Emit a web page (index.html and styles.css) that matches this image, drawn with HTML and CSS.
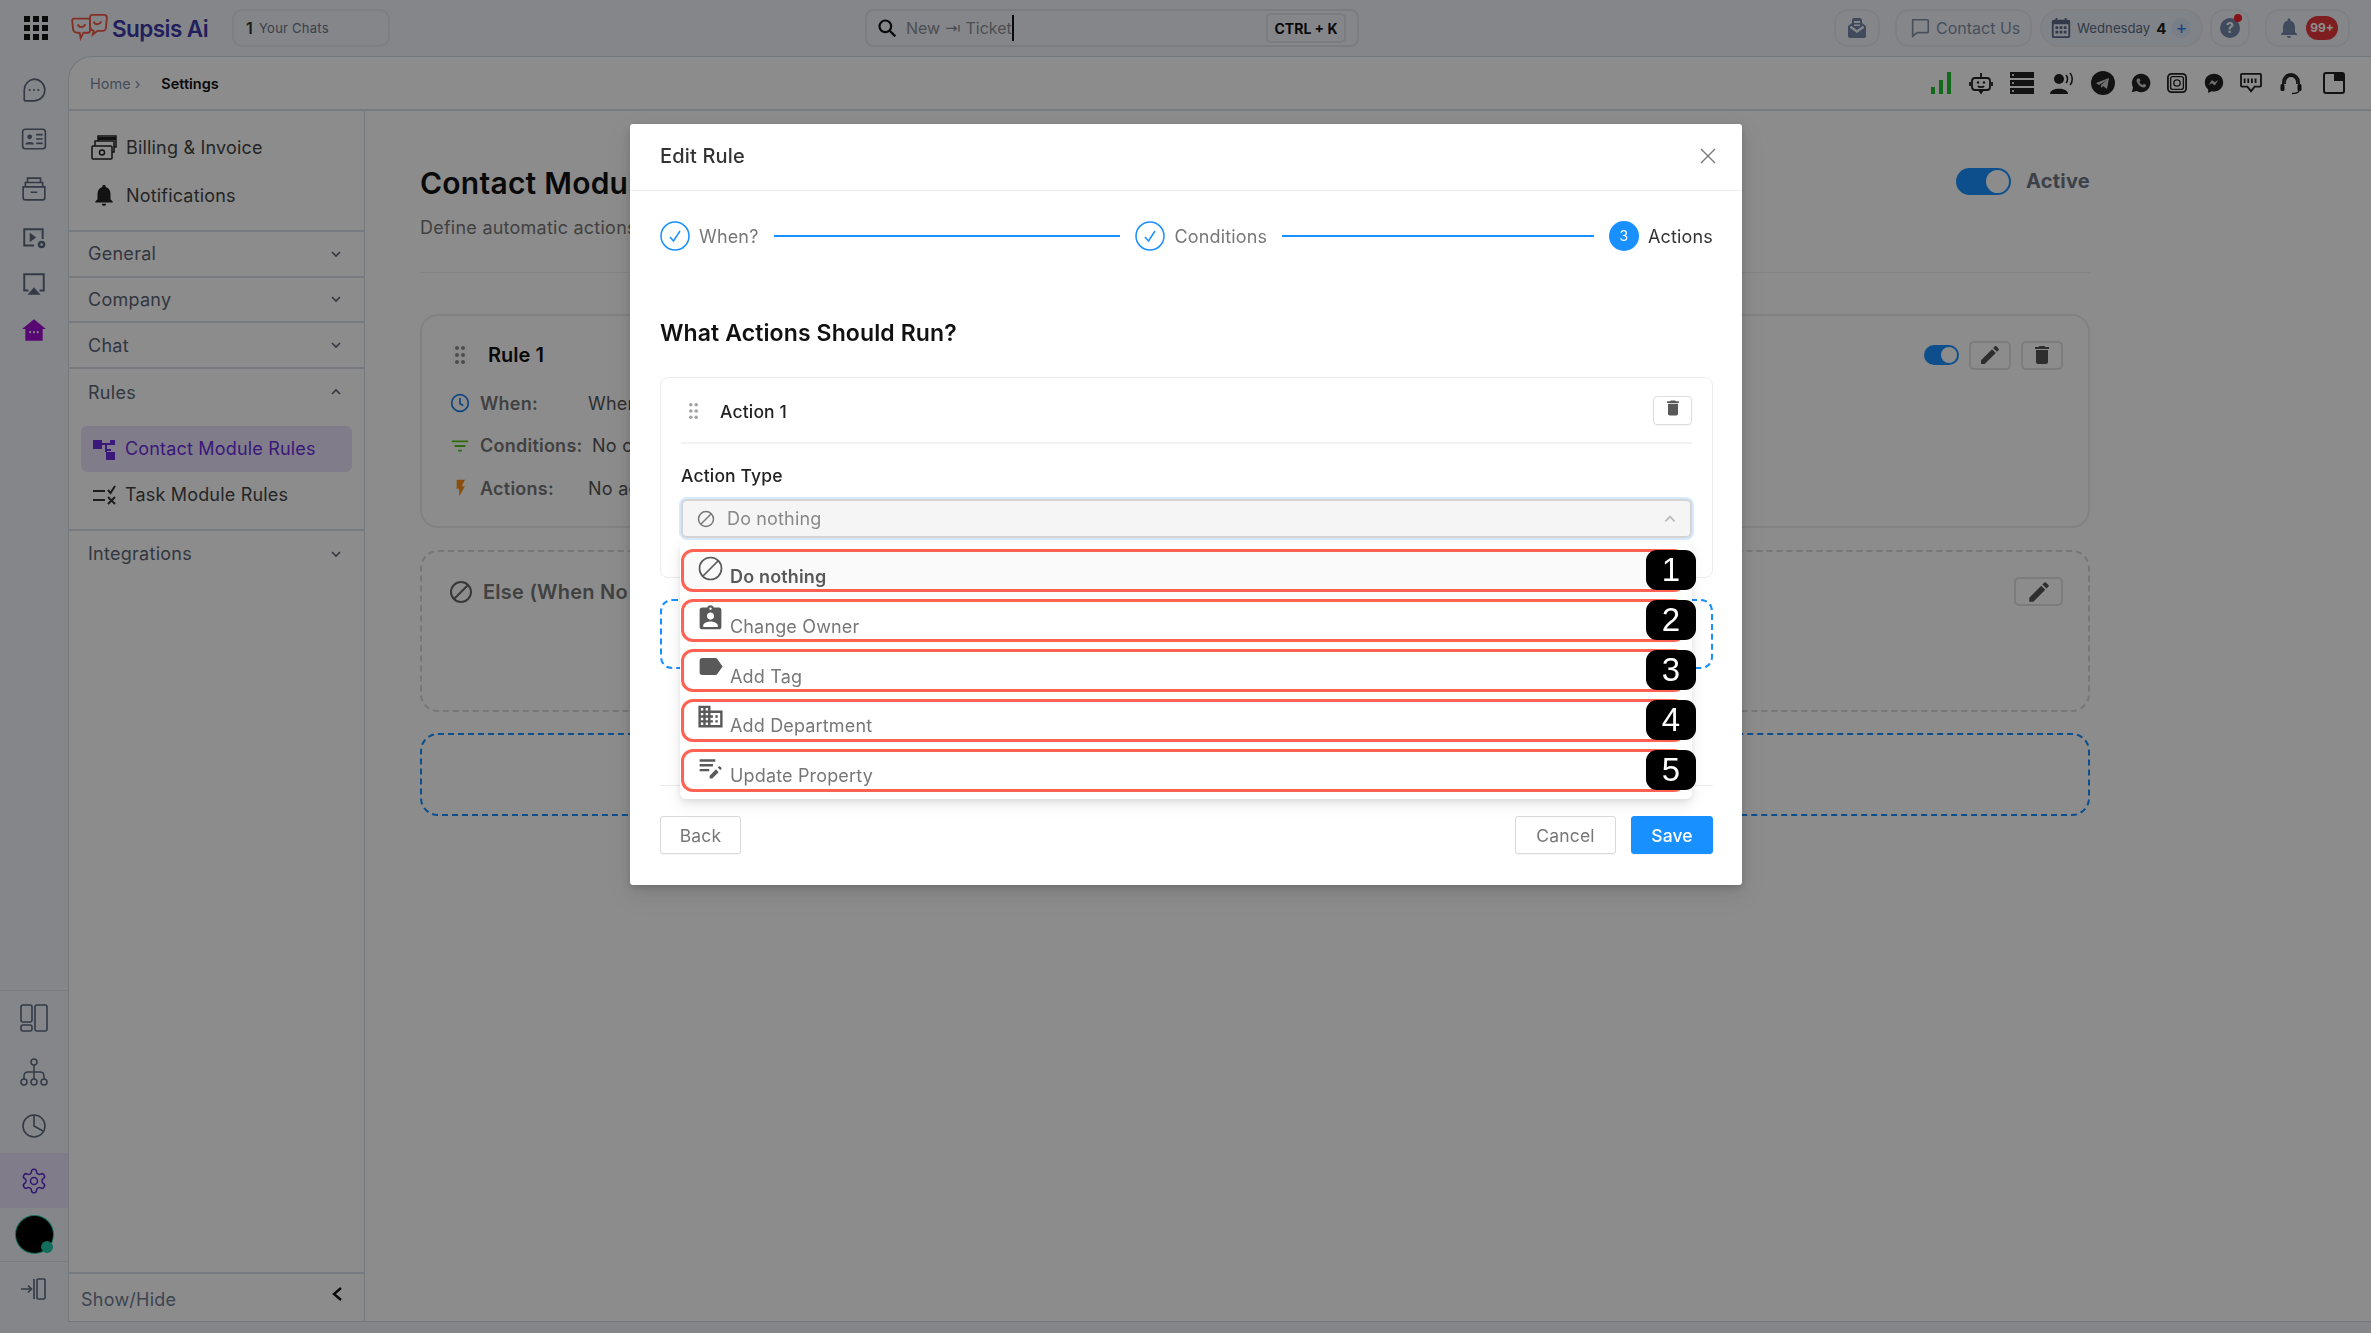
FILE: index.html
```html
<!DOCTYPE html>
<html lang="en">
<head>
<meta charset="utf-8">
<title>Supsis Ai - Settings</title>
<link rel="stylesheet" href="styles.css">
</head>
<body>
<svg class="defs" width="0" height="0" aria-hidden="true">
  <symbol id="i-delete" viewBox="0 0 24 24"><path fill="currentColor" d="M6 19c0 1.1.9 2 2 2h8c1.1 0 2-.9 2-2V7H6v12zM19 4h-3.5l-1-1h-5l-1 1H5v2h14V4z"/></symbol>
  <symbol id="i-edit" viewBox="0 0 24 24"><path fill="currentColor" d="M3 17.25V21h3.75L17.81 9.94l-3.75-3.75L3 17.25zM20.71 7.04c.39-.39.39-1.02 0-1.41l-2.34-2.34c-.39-.39-1.02-.39-1.41 0l-1.83 1.83 3.75 3.75 1.83-1.83z"/></symbol>
  <symbol id="i-grip" viewBox="0 0 12 20"><g fill="currentColor"><circle cx="3" cy="3" r="2"/><circle cx="9" cy="3" r="2"/><circle cx="3" cy="10" r="2"/><circle cx="9" cy="10" r="2"/><circle cx="3" cy="17" r="2"/><circle cx="9" cy="17" r="2"/></g></symbol>
  <symbol id="i-block" viewBox="0 0 24 24"><g fill="none" stroke="currentColor" stroke-width="2"><circle cx="12" cy="12" r="10"/><path d="M5 19 19 5"/></g></symbol>
  <symbol id="i-down" viewBox="0 0 12 12"><path fill="none" stroke="currentColor" stroke-width="1.6" d="M2 4l4 4 4-4"/></symbol>
  <symbol id="i-up" viewBox="0 0 12 12"><path fill="none" stroke="currentColor" stroke-width="1.6" d="M2 8l4-4 4 4"/></symbol>
  <symbol id="i-check" viewBox="0 0 30 30"><circle cx="15" cy="15" r="14" fill="none" stroke="currentColor" stroke-width="1.5"/><path d="M10 16l3.5 4L20 10" fill="none" stroke="currentColor" stroke-width="1.5"/></symbol>
</svg>

<header class="topbar">
  <div class="top-left">
    <svg class="apps" viewBox="0 0 24 24" width="24" height="24"><g fill="#111"><rect x="0" y="0" width="6" height="6"/><rect x="9" y="0" width="6" height="6"/><rect x="18" y="0" width="6" height="6"/><rect x="0" y="9" width="6" height="6"/><rect x="9" y="9" width="6" height="6"/><rect x="18" y="9" width="6" height="6"/><rect x="0" y="18" width="6" height="6"/><rect x="9" y="18" width="6" height="6"/><rect x="18" y="18" width="6" height="6"/></g></svg>
    <svg class="logo" viewBox="0 0 40 32" width="38" height="30"><g fill="none" stroke="#ef5a44" stroke-width="2"><path d="M3 6h15c1 0 2 1 2 2v11c0 1-1 2-2 2h-5l-3 6-1-6H6c-2 0-3-1-4-3L1 8c0-1 1-2 2-2z"/><path d="M22 2h13c2 0 3 1 3 3l-1 11c0 2-2 3-3 3h-6l-5 4 1-4c-3-1-4-3-4-5V5c0-2 1-3 2-3z"/><path d="M7 12c1 4 6 4 8 0M24 9c1 4 6 4 8 0"/></g></svg>
    <span class="brand">Supsis Ai</span>
    <div class="chats-box"><b>1</b><span>Your Chats</span></div>
  </div>
  <div class="search">
    <svg viewBox="0 0 24 24" width="20" height="20"><circle cx="10" cy="10" r="7" fill="none" stroke="#111" stroke-width="2.6"/><path d="M15 15l7 7" stroke="#111" stroke-width="2.8"/></svg>
    <span class="search-text">New ⇥ Ticket</span><span class="caret"></span>
    <span class="kbd">CTRL + K</span>
  </div>
  <div class="top-right">
    <div class="pill pill-mail"><svg viewBox="0 0 24 24" width="24" height="24"><path fill="#7387a8" d="M3 10l4-3V4c0-1 1-2 2-2h6c1 0 2 1 2 2v3l4 3v10c0 1-1 2-2 2H5c-1 0-2-1-2-2V10zm6-5v2h6V5H9zm0 3.5V10h6V8.5H9zM5 12l7 5 7-5v-1l-2-1.500v1L12 14 7 10.500v-1L5 11v1z"/></svg></div>
    <div class="pill pill-contact"><svg viewBox="0 0 24 24" width="22" height="22"><path fill="none" stroke="#8190a8" stroke-width="1.800" d="M4 3h16c1 0 1 .5 1 1v12c0 1-.500 1-1 1H9l-5 4V4c0-.5 0-1 0-1z"/></svg><span>Contact Us</span></div>
    <div class="pill pill-cal"><svg viewBox="0 0 24 24" width="22" height="22"><path fill="#5b6b85" d="M6 1h2v2h8V1h2v2h2c1 0 2 1 2 2v16c0 1-1 2-2 2H4c-1 0-2-1-2-2V5c0-1 1-2 2-2h2V1zM4 8v13h16V8H4zm2 2h3v3H6v-3zm4.500 0h3v3h-3v-3zm4.500 0h3v3h-3v-3zM6 15h3v3H6v-3zm4.500 0h3v3h-3v-3zm4.500 0h3v3h-3v-3z"/></svg><span class="cal-day">Wednesday</span><b class="cal-num">4</b><span class="cal-plus">+</span></div>
    <div class="pill pill-help"><span class="help-mark">?</span><span class="help-dot"></span></div>
    <div class="pill pill-bell"><svg viewBox="0 0 24 24" width="24" height="24"><path fill="#7387a8" d="M12 22c1.100 0 2-.9 2-2h-4c0 1.100.9 2 2 2zm6-6v-5c0-3.070-1.630-5.640-4.500-6.320V4c0-.83-.67-1.500-1.500-1.500s-1.500.67-1.500 1.500v.68C7.640 5.360 6 7.920 6 11v5l-2 2v1h16v-1l-2-2z"/></svg><span class="count">99+</span></div>
  </div>
</header>

<div class="shell">
  <nav class="rail">
    <div class="rail-top">
      <div class="rail-item"><svg viewBox="0 0 24 24" width="26" height="26"><path fill="none" stroke="#5d6a80" stroke-width="1.500" d="M12 2a10 10 0 0 1 0 20H4c-1 0-1-.5-1-1v-9A10 10 0 0 1 12 2z"/><g fill="#5d6a80"><circle cx="8" cy="12" r="1"/><circle cx="12" cy="12" r="1"/><circle cx="16" cy="12" r="1"/></g></svg></div>
      <div class="rail-item"><svg viewBox="0 0 24 24" width="26" height="26"><rect x="1.500" y="3" width="21" height="18" rx="2.500" fill="none" stroke="#5d6a80" stroke-width="1.500"/><circle cx="8" cy="10" r="2.200" fill="#5d6a80"/><path fill="#5d6a80" d="M4 17c0-3 8-3 8 0z"/><path stroke="#5d6a80" stroke-width="1.500" d="M14 8h6M14 12h6M14 16h6"/></svg></div>
      <div class="rail-item"><svg viewBox="0 0 24 24" width="26" height="26"><path fill="none" stroke="#5d6a80" stroke-width="1.500" d="M2 10h20v10c0 1-1 2-2 2H4c-1 0-2-1-2-2V10zM4 10V6h16v4M6 6V2h12v4M9 15h6"/></svg></div>
      <div class="rail-item"><svg viewBox="0 0 24 24" width="26" height="26"><path fill="none" stroke="#5d6a80" stroke-width="1.800" d="M12 19H3V4h17v9"/><path fill="#5d6a80" d="M8 7l6 4.500L8 16z"/><circle cx="19" cy="18" r="3.500" fill="#5d6a80"/><circle cx="19" cy="18" r="1.200" fill="#f2f5fb"/></svg></div>
      <div class="rail-item rail-item-sm"><svg viewBox="0 0 24 24" width="26" height="26"><path fill="none" stroke="#5d6a80" stroke-width="1.800" d="M7 18H3V3h18v15h-4"/><path fill="#5d6a80" d="M12 15l6 7H6z"/></svg></div>
      <div class="rail-item rail-item-last"><svg viewBox="0 0 24 24" width="26" height="26"><path fill="#a010d0" d="M12 2l11 9h-3v11H4V11H1z"/><g fill="#f2f5fb"><circle cx="8.500" cy="14" r="1"/><circle cx="12" cy="14" r="1"/><circle cx="15.500" cy="14" r="1"/></g></svg></div>
    </div>
    <div class="rail-bottom">
      <div class="rail-row"><svg viewBox="0 0 28 28" width="28" height="28"><g fill="none" stroke="#5d6a80" stroke-width="1.600"><rect x="1" y="1" width="11" height="17" rx="2"/><rect x="1" y="21" width="11" height="6" rx="2"/><rect x="15" y="1" width="12" height="26" rx="2"/></g></svg></div>
      <div class="rail-row"><svg viewBox="0 0 28 28" width="28" height="28"><g fill="none" stroke="#5d6a80" stroke-width="1.500"><circle cx="14" cy="4" r="3"/><circle cx="4" cy="24" r="3"/><circle cx="14" cy="24" r="3"/><circle cx="24" cy="24" r="3"/><path d="M14 7v14M4 21v-3c0-3 2-4 4-4h12c2 0 4 1 4 4v3"/></g></svg></div>
      <div class="rail-row"><svg viewBox="0 0 26 26" width="26" height="26"><g fill="none" stroke="#5d6a80" stroke-width="1.600"><circle cx="13" cy="13" r="11"/><path d="M13 2v11l9 5"/></g></svg></div>
      <div class="rail-row rail-row-active"><svg viewBox="0 0 24 24" width="28" height="28"><g fill="none" stroke="#5b2bd0" stroke-width="1.300"><path d="M12.220 2h-.44a2 2 0 0 0-2 2v.18a2 2 0 0 1-1 1.730l-.43.25a2 2 0 0 1-2 0l-.15-.08a2 2 0 0 0-2.730.73l-.22.38a2 2 0 0 0 .73 2.730l.15.1a2 2 0 0 1 1 1.720v.51a2 2 0 0 1-1 1.740l-.15.09a2 2 0 0 0-.73 2.730l.22.38a2 2 0 0 0 2.730.73l.15-.08a2 2 0 0 1 2 0l.43.25a2 2 0 0 1 1 1.730V20a2 2 0 0 0 2 2h.44a2 2 0 0 0 2-2v-.18a2 2 0 0 1 1-1.730l.43-.25a2 2 0 0 1 2 0l.15.08a2 2 0 0 0 2.730-.73l.22-.39a2 2 0 0 0-.73-2.730l-.15-.08a2 2 0 0 1-1-1.740v-.5a2 2 0 0 1 1-1.740l.15-.09a2 2 0 0 0 .73-2.730l-.22-.38a2 2 0 0 0-2.730-.73l-.15.08a2 2 0 0 1-2 0l-.43-.25a2 2 0 0 1-1-1.730V4a2 2 0 0 0-2-2z"/><circle cx="12" cy="12" r="3"/></g></svg></div>
      <div class="rail-row rail-row-avatar"><span class="avatar"><span class="avatar-dot"></span></span></div>
      <div class="rail-row rail-row-exit"><svg viewBox="0 0 26 24" width="26" height="24"><g fill="none" stroke="#5d6a80" stroke-width="1.600"><path d="M0 12h10M7 8.500l3.500 3.500L7 15.500M13 2v20"/><rect x="16" y="2" width="8" height="20" rx="1"/></g></svg></div>
    </div>
  </nav>

  <div class="panel">
    <div class="crumbs">
      <div class="crumb-path"><span class="crumb-home">Home ›</span><span class="crumb-now">Settings</span></div>
      <div class="crumb-icons">
        <svg class="ci" viewBox="0 0 22 22" width="22" height="22"><g fill="#20c030"><rect x="0" y="15" width="4" height="7"/><rect x="8" y="8" width="4" height="14"/><rect x="16" y="0" width="4" height="22"/></g></svg>
        <svg class="ci" viewBox="0 0 24 24" width="24" height="24"><g fill="none" stroke="#222" stroke-width="1.800"><rect x="3" y="7" width="18" height="12" rx="3"/><path d="M12 2v5M1 11v4M23 11v4M9 15c1 1.500 5 1.500 6 0M10 19l2 3 2-3"/></g><circle cx="9" cy="11.500" r="1.200" fill="#222"/><circle cx="15" cy="11.500" r="1.200" fill="#222"/></svg>
        <svg class="ci" viewBox="0 0 24 22" width="24" height="22"><g fill="#222"><rect width="24" height="6"/><rect y="8" width="24" height="6"/><rect y="16" width="24" height="6"/></g><g fill="#ddd"><rect x="2" y="2" width="2" height="2"/><rect x="2" y="10" width="2" height="2"/><rect x="2" y="18" width="2" height="2"/></g></svg>
        <svg class="ci" viewBox="0 0 24 22" width="24" height="22"><circle cx="9" cy="7" r="5" fill="#222"/><path fill="#222" d="M0 22c0-7 18-7 18 0z"/><path fill="none" stroke="#222" stroke-width="1.600" d="M16 3c2 2 2 6 0 8M20 1c3 3 3 9 0 12"/></svg>
        <svg class="ci" viewBox="0 0 24 24" width="24" height="24"><circle cx="12" cy="12" r="12" fill="#222"/><path fill="#ccc" d="M5 12l13-5-2 11-4-3-2 2v-3l6-5-8 5z"/></svg>
        <svg class="ci" viewBox="0 0 24 24" width="20" height="20"><path fill="#222" d="M12 1a11 11 0 0 0-9.500 16.500L1 23l5.700-1.500A11 11 0 1 0 12 1z"/><path fill="#ccc" d="M8 6.500c-1.500 1-2 3 0 6s5 5 7.500 5c1.500 0 3-1.500 2.500-3l-2.500-1.500-1.500 1.500c-1.500-.5-3.500-2.500-4-4l1.500-1.500L10 6.500z"/></svg>
        <svg class="ci" viewBox="0 0 22 22" width="20" height="22"><rect x="1" y="1" width="20" height="20" rx="4" fill="none" stroke="#222" stroke-width="2"/><rect x="4" y="4" width="14" height="14" rx="2" fill="none" stroke="#222" stroke-width="1.500"/><circle cx="11" cy="11" r="3.500" fill="none" stroke="#222" stroke-width="1.500"/></svg>
        <svg class="ci" viewBox="0 0 24 24" width="20" height="20"><path fill="#222" d="M12 1C5.500 1 1 5.500 1 11.500c0 3.500 1.500 6.300 4 8.200V24l4-2.200c1 .3 2 .4 3 .4 6.500 0 11-4.700 11-10.700S18.500 1 12 1z"/><path fill="#ccc" d="M5.500 14.500l4-6 3.500 2.700L17 8.500 13 15l-3.500-2.700z"/></svg>
        <svg class="ci" viewBox="0 0 24 22" width="22" height="20"><path fill="none" stroke="#222" stroke-width="2" d="M2 1h20c.6 0 1 .4 1 1v12c0 .6-.4 1-1 1h-6l-4 5-4-5H2c-.6 0-1-.4-1-1V2c0-.6.4-1 1-1z"/><path stroke="#222" stroke-width="2" d="M5 6v5M9 6v5M13 6v5M17 6v5"/></svg>
        <svg class="ci" viewBox="0 0 24 24" width="24" height="24"><path fill="none" stroke="#222" stroke-width="1.800" d="M4 15V11a8 8 0 0 1 16 0v4M6 13V11a6 6 0 0 1 12 0v2"/><rect x="1.500" y="13" width="4" height="7" rx="1.500" fill="#222"/><rect x="18.500" y="13" width="4" height="7" rx="1.500" fill="#222"/><path fill="none" stroke="#222" stroke-width="1.500" d="M20 20c-1 2-4 2.500-7 2.500"/></svg>
        <svg class="ci ci-last" viewBox="0 0 22 22" width="22" height="22"><rect x="1" y="1" width="20" height="20" rx="2" fill="none" stroke="#222" stroke-width="2"/><path fill="#222" d="M11 1h10v8H11z"/></svg>
      </div>
    </div>

    <div class="panel-body">
      <aside class="side">
        <div class="side-top">
          <div class="side-link"><svg viewBox="0 0 26 26" width="26" height="26"><g fill="none" stroke="#222" stroke-width="1.500"><rect x="1" y="12" width="20" height="13" rx="1"/><circle cx="11" cy="18.500" r="2.500"/><path d="M4 12V7h19v11h-2M7 7V2h18v11h-2"/></g><rect x="7" y="3" width="18" height="3" fill="#222"/></svg><span>Billing &amp; Invoice</span></div>
          <div class="side-link"><svg viewBox="0 0 24 24" width="26" height="26"><path fill="#222" d="M12 22c1.100 0 2-.9 2-2h-4c0 1.100.9 2 2 2zm6-6v-5c0-3.070-1.630-5.640-4.500-6.320V4c0-.83-.67-1.500-1.500-1.500s-1.500.67-1.500 1.500v.68C7.640 5.360 6 7.920 6 11v5l-2 2v1h16v-1l-2-2z"/></svg><span>Notifications</span></div>
        </div>
        <div class="acc"><span>General</span><svg width="12" height="12"><use href="#i-down"/></svg></div>
        <div class="acc"><span>Company</span><svg width="12" height="12"><use href="#i-down"/></svg></div>
        <div class="acc"><span>Chat</span><svg width="12" height="12"><use href="#i-down"/></svg></div>
        <div class="acc-open">
          <div class="acc acc-head"><span>Rules</span><svg width="12" height="12"><use href="#i-up"/></svg></div>
          <div class="sub sub-active"><svg viewBox="0 0 24 24" width="24" height="24"><g fill="#6a2fe0"><rect x="1" y="3" width="9" height="9"/><rect x="18" y="3" width="5" height="5"/><rect x="14" y="15" width="9" height="8"/><path d="M10 6h8v2h-3v7h-2V8h-3zM14 12h5v2h-5z"/></g></svg><span>Contact Module Rules</span></div>
          <div class="sub"><svg viewBox="0 0 24 24" width="24" height="24"><path fill="none" stroke="#333" stroke-width="2" d="M1 8h12M1 17h12M16 7l2.500 3L23 3M16 14l7 7M23 14l-7 7"/></svg><span>Task Module Rules</span></div>
        </div>
        <div class="acc acc-last"><span>Integrations</span><svg width="12" height="12"><use href="#i-down"/></svg></div>
        <div class="showhide"><span>Show/Hide</span><svg viewBox="0 0 12 16" width="12" height="16"><path d="M10 2L3 8l7 6" fill="none" stroke="#111" stroke-width="2.400"/></svg></div>
      </aside>

      <main class="content">
        <div class="content-head">
          <div>
            <h1 class="page-title">Contact Module Rules</h1>
            <p class="page-sub">Define automatic actions</p>
          </div>
          <div class="active-wrap"><span class="toggle toggle-lg"></span><span class="active-label">Active</span></div>
        </div>
        <section class="rule-card">
          <div class="rule-head">
            <svg class="grip" width="12" height="20"><use href="#i-grip"/></svg>
            <span class="rule-name">Rule 1</span>
            <span class="rule-tools"><span class="toggle toggle-sm"></span><span class="tool"><svg width="24" height="24"><use href="#i-edit"/></svg></span><span class="tool"><svg width="24" height="24"><use href="#i-delete"/></svg></span></span>
          </div>
          <div class="rule-line"><svg viewBox="0 0 24 24" width="20" height="20"><circle cx="12" cy="12" r="10" fill="none" stroke="#1d7fe8" stroke-width="2"/><path d="M12 6v7l4 2" fill="none" stroke="#1d7fe8" stroke-width="2"/></svg><b>When:</b><span>When</span></div>
          <div class="rule-line"><svg viewBox="1 1 22 22" width="20" height="20"><path fill="#52c41a" d="M10 18h4v-2h-4v2zM3 6v2h18V6H3zm3 7h12v-2H6v2z"/></svg><b>Conditions:</b><span class="val-tight">No conditions</span></div>
          <div class="rule-line"><svg viewBox="0 0 24 24" width="20" height="20"><path fill="#fa8c16" d="M7 2v11h3v9l7-12h-4l4-8z" transform="translate(1 0)"/></svg><b>Actions:</b><span>No actions</span></div>
        </section>
        <section class="else-card">
          <div class="else-head"><svg width="24" height="24"><use href="#i-block"/></svg><span class="else-title">Else (When No Rule Matches)</span><span class="tool tool-wide"><svg width="26" height="26"><use href="#i-edit"/></svg></span></div>
        </section>
        <div class="add-rule"></div>
      </main>
    </div>
  </div>
</div>
<div class="footer-band"></div>

<div class="mask"></div>
<div class="modal">
  <div class="modal-head"><span>Edit Rule</span><svg viewBox="0 0 16 16" width="16" height="16"><path d="M1 1l14 14M15 1L1 15" stroke="#777" stroke-width="1.400"/></svg></div>
  <div class="modal-body">
    <div class="stepper">
      <div class="step"><svg class="step-ic" width="30" height="30"><use href="#i-check"/></svg><span>When?</span></div>
      <div class="step-line"></div>
      <div class="step"><svg class="step-ic" width="30" height="30"><use href="#i-check"/></svg><span>Conditions</span></div>
      <div class="step-line step-line-b"></div>
      <div class="step step-now"><span class="step-num">3</span><span>Actions</span></div>
    </div>
    <h2 class="modal-h2">What Actions Should Run?</h2>
    <div class="action-card">
      <div class="action-head">
        <svg class="action-grip" width="11" height="18"><use href="#i-grip"/></svg>
        <span class="action-name">Action 1</span>
        <span class="action-del"><svg width="20" height="20"><use href="#i-delete"/></svg></span>
      </div>
      <div class="action-label">Action Type</div>
      <div class="select">
        <svg width="18" height="18"><use href="#i-block"/></svg>
        <span>Do nothing</span>
        <svg class="select-chev" width="14" height="14"><use href="#i-up"/></svg>
      </div>
    </div>
    <div class="add-action"></div>
  </div>
  <div class="modal-foot">
    <button class="btn">Back</button>
    <span class="foot-right"><button class="btn">Cancel</button><button class="btn btn-save">Save</button></span>
  </div>

  <ul class="dropdown">
    <li class="opt opt-first"><svg width="29" height="29" viewBox="-2.500 -4.500 29 29"><g fill="none" stroke="currentColor" stroke-width="1.700"><circle cx="12" cy="12" r="11"/><path d="M4 20 20 4"/></g></svg><span>Do nothing</span><b class="num">1</b></li>
    <li class="opt"><svg width="29" height="29" viewBox="0 -1.600 24 24"><path fill="currentColor" d="M19 3h-4.180C14.400 1.840 13.300 1 12 1c-1.300 0-2.400.84-2.820 2H5c-1.100 0-2 .9-2 2v14c0 1.100.9 2 2 2h14c1.100 0 2-.9 2-2V5c0-1.100-.9-2-2-2zm-7 0c.55 0 1 .45 1 1s-.45 1-1 1-1-.45-1-1 .45-1 1-1zm0 4c1.660 0 3 1.340 3 3s-1.340 3-3 3-3-1.340-3-3 1.340-3 3-3zm6 12H6v-1.400c0-2 4-3.100 6-3.100s6 1.100 6 3.100V19z"/></svg><span>Change Owner</span><b class="num">2</b></li>
    <li class="opt"><svg width="29" height="29" viewBox="0 0 24 24"><path fill="currentColor" d="M17.630 5.840C17.270 5.330 16.670 5 16 5L5 5.010C3.900 5.010 3 5.900 3 7v10c0 1.100.9 1.990 2 1.990L16 19c.67 0 1.270-.33 1.630-.84L22 12l-4.370-6.160z"/></svg><span>Add Tag</span><b class="num">3</b></li>
    <li class="opt"><svg width="29" height="29" viewBox="0 0 24 24"><path fill="currentColor" d="M12 7V3H2v18h20V7H12zM6 19H4v-2h2v2zm0-4H4v-2h2v2zm0-4H4V9h2v2zm0-4H4V5h2v2zm4 12H8v-2h2v2zm0-4H8v-2h2v2zm0-4H8V9h2v2zm0-4H8V5h2v2zm10 12h-8v-2h2v-2h-2v-2h2v-2h-2V9h8v10zm-2-8h-2v2h2v-2zm0 4h-2v2h2v-2z"/></svg><span>Add Department</span><b class="num">4</b></li>
    <li class="opt"><svg width="29" height="29" viewBox="0 0 24 24"><path fill="currentColor" d="M3 10h11v2H3v-2zm0-2h13V6H3v2zm0 8h8v-2H3v2zm15.010-3.130l.71-.71c.39-.39 1.020-.39 1.410 0l.71.71c.39.39.39 1.020 0 1.410l-.71.71-2.120-2.120zm-1.410 1.410L11.300 19.600V22h2.120l5.300-5.300-2.120-2.420z"/></svg><span>Update Property</span><b class="num">5</b></li>
  </ul>
</div>
</body>
</html>
```

FILE: styles.css
```css
* { box-sizing: border-box; }
html, body { margin: 0; height: 100%; }
body {
  height: 1333px;
  overflow: hidden;
  display: flex;
  flex-direction: column;
  background: #f2f5fb;
  font-family: Inter, "Noto Sans", "Liberation Sans", sans-serif;
  letter-spacing: .015em;
  color: #111;
}
svg { display: block; flex: none; }
.defs { position: absolute; }

/* top bar */
.topbar { height: 56px; flex: none; display: flex; align-items: center; }
.top-left { flex: 0 0 865px; display: flex; align-items: center; padding-left: 24px; }
.logo { margin-left: 23px; }
.brand { margin-left: 3px; font-size: 22.500px; font-weight: 600; color: #3c3aa8; letter-spacing: -.025em; white-space: nowrap; }
.chats-box { margin-left: 24px; width: 158px; height: 38px; border: 2px solid #e3e7ee; border-radius: 10px; display: flex; align-items: center; gap: 6px; padding-left: 12px; font-size: 13px; color: #6b7486; }
.chats-box b { font-size: 16px; color: #333; font-weight: 600; }
.search { width: 494px; height: 38px; border: 2px solid #dfe3ea; border-radius: 8px; display: flex; align-items: center; padding: 0 11px 0 10px; }
.search-text { margin-left: 9px; font-size: 16px; color: #8d8f95; letter-spacing: 0; }
.caret { width: 2px; height: 26px; background: #111; }
.kbd { margin-left: auto; width: 80px; height: 30px; border: 2px solid #dfe3ea; border-radius: 5px; display: flex; align-items: center; justify-content: center; font-size: 14px; font-weight: 700; color: #111; letter-spacing: 0; }
.top-right { flex: 1; display: flex; justify-content: flex-end; padding-right: 21px; align-items: center; }
.pill { height: 38px; border: 2px solid #e7eaf1; border-radius: 14px; display: flex; align-items: center; position: relative; }
.pill-mail { width: 46px; justify-content: center; }
.pill-contact { width: 137px; margin-left: 15px; padding-left: 12px; gap: 5px; font-size: 16px; color: #8190a8; white-space: nowrap; letter-spacing: 0; }
.pill-cal { width: 163px; margin-left: 8px; padding-left: 8px; gap: 5px; border-radius: 20px; background: #e9eff8; font-size: 13.200px; color: #5b6b85; letter-spacing: 0; }
.cal-num { color: #222; font-size: 15px; margin-left: 1px; }
.cal-plus { width: 20px; height: 20px; border-radius: 50%; background: #dbe7f7; color: #2f80ed; text-align: center; line-height: 20px; font-size: 18px; }
.pill-help { width: 40px; margin-left: 7px; justify-content: center; }
.help-mark { width: 20px; height: 20px; border-radius: 50%; background: #7387a8; color: #fff; font-size: 14px; font-weight: 700; line-height: 20px; text-align: center; }
.help-dot { position: absolute; right: 6px; top: 3px; width: 8px; height: 8px; border-radius: 50%; background: #f5222d; }
.pill-bell { width: 85px; margin-left: 15px; padding-left: 10px; gap: 5px; }
.count { width: 32px; height: 24px; border-radius: 12px; background: #e5383b; color: #fff; font-size: 12px; font-weight: 700; line-height: 24px; text-align: center; letter-spacing: 0; }

/* shell */
.shell { flex: 1; display: flex; min-height: 0; }
.footer-band { flex: none; height: 11px; }
.rail { width: 68px; flex: none; display: flex; flex-direction: column; justify-content: space-between; }
.rail-top { padding-top: 9px; }
.rail-item { height: 49.500px; display: flex; align-items: center; justify-content: center; }
.rail-item-sm { height: 46px; margin-top: -2px; }
.rail-item-last { height: 46px; }
.rail-bottom { border-top: 1px solid #dbe0e8; }
.rail-row { height: 54px; display: flex; align-items: center; justify-content: center; }
.rail-row-active { height: 55px; background: #e9e2fb; }
.rail-row-avatar { border-bottom: 1px solid #dbe0e8; }
.rail-row-exit { height: 60px; align-items: flex-start; padding-top: 15px; }
.avatar { width: 37px; height: 37px; border-radius: 50%; background: #000; position: relative; box-shadow: 0 0 0 1px #22c7a9; }
.avatar-dot { position: absolute; right: 0; bottom: 0; width: 12px; height: 12px; border-radius: 50%; background: #22c7a9; }

.panel { flex: 1; min-width: 0; display: flex; flex-direction: column; background: #fff; border-left: 1px solid #d1dae3; border-top: 1px solid #d1dae3; border-bottom: 1px solid #d1dae3; border-top-left-radius: 24px; }
.crumbs { height: 54px; flex: none; display: flex; align-items: center; border-bottom: 2px solid #d9dfe6; padding: 0 26px 0 21px; }
.crumb-path { display: flex; gap: 21px; font-size: 14.500px; }
.crumb-home { color: #7c8aa3; letter-spacing: 0; }
.crumb-now { font-weight: 600; color: #111; letter-spacing: 0; }
.crumb-icons { margin-left: auto; display: flex; align-items: center; gap: 16.400px; }
.ci-last { margin-left: 4px; }
.panel-body { flex: 1; display: flex; min-height: 0; }

/* sidebar */
.side { width: 296px; flex: none; border-right: 1px solid #d1dae3; display: flex; flex-direction: column; }
.side-top { height: 121px; flex: none; padding-top: 12px; border-bottom: 2px solid #d9dfe6; }
.side-link { height: 48px; display: flex; align-items: center; gap: 9px; padding-left: 22px; font-size: 18px; color: #444; letter-spacing: .01em; }
.acc { height: 45.670px; flex: none; display: flex; align-items: center; justify-content: space-between; padding: 0 22px 0 19px; border-bottom: 2px solid #d9dfe6; font-size: 18px; color: #5b6577; letter-spacing: .015em; }
.acc-head { border-bottom: 0; height: 47px; }
.acc-open { height: 162px; flex: none; border-bottom: 2px solid #d9dfe6; display: flex; flex-direction: column; }
.sub { height: 46px; margin: 0 12px; flex: none; display: flex; align-items: center; gap: 9px; padding-left: 11px; font-size: 18px; color: #444; border-radius: 6px; letter-spacing: .01em; white-space: nowrap; }
.sub-active { margin-top: 10px; background: #e9e2fb; color: #6a2fe0; }
.acc-last { border-bottom: 0; }
.showhide { margin-top: auto; height: 49px; flex: none; border-top: 2px solid #d9dfe6; display: flex; align-items: center; justify-content: space-between; padding: 0 21px 0 12px; font-size: 18px; color: #6f7c92; }
.showhide span { padding-top: 3px; }
.showhide svg { margin-bottom: 8px; }

/* content */
.content { flex: 1; min-width: 0; padding: 0 281px 0 55px; display: flex; flex-direction: column; }
.content-head { height: 162px; flex: none; display: flex; justify-content: space-between; border-bottom: 1px solid #f0f0f0; padding-top: 50px; }
.page-title { margin: 0; font-size: 30px; line-height: 44px; font-weight: 600; color: #111; white-space: nowrap; }
.page-sub { margin: 9px 0 0; font-size: 18px; line-height: 28px; color: #777; white-space: nowrap; }
.active-wrap { display: flex; align-items: center; gap: 15px; height: 28px; margin-top: 6px; }
.active-label { font-size: 20px; font-weight: 700; color: #6e7686; }
.toggle { display: block; background: #1890ff; border-radius: 20px; position: relative; }
.toggle::after { content: ""; position: absolute; background: #fff; border-radius: 50%; top: 2px; right: 2px; }
.toggle-lg { width: 55px; height: 27px; }
.toggle-lg::after { width: 23px; height: 23px; }
.toggle-sm { width: 35px; height: 20px; }
.toggle-sm::after { width: 16px; height: 16px; }

.rule-card { margin-top: 41px; height: 214px; flex: none; border: 2px solid #ededed; border-radius: 18px; padding: 25px 25px 0 28px; }
.rule-head { height: 28px; display: flex; align-items: center; margin-bottom: 13px; }
.grip { color: #8c8c8c; margin-left: 4px; }
.rule-name { margin-left: 22px; font-size: 20px; font-weight: 600; letter-spacing: 0; }
.rule-tools { margin-left: auto; display: flex; align-items: center; gap: 10px; }
.tool { width: 42px; height: 29px; border: 2px solid #e2e2e2; border-radius: 5px; display: flex; align-items: center; justify-content: center; color: #555; }
.rule-line { height: 42.500px; display: flex; align-items: center; font-size: 18px; color: #555; }
.rule-line svg { margin-right: 10px; }
.rule-line b { width: 108px; font-weight: 600; color: #777; white-space: nowrap; }
.rule-line span { white-space: nowrap; }
.val-tight { margin-left: 4px; }
.else-card { margin-top: 22px; height: 162px; flex: none; border: 2px dashed #d9d9d9; border-radius: 18px; padding: 25px 25px 0 27px; }
.else-head { display: flex; align-items: center; color: #666; }
.else-title { margin-left: 10px; font-size: 20px; font-weight: 600; color: #777; white-space: nowrap; }
.tool-wide { margin-left: auto; width: 49px; }
.add-rule { margin-top: 21px; height: 83px; flex: none; border: 2px dashed #1890ff; border-radius: 18px; }

/* mask + modal */
.mask { position: fixed; inset: 0; background: rgba(0, 0, 0, .45); }
.modal { position: fixed; left: 630px; top: 124px; width: 1112px; height: 761px; background: #fff; border-radius: 3px; display: flex; flex-direction: column; box-shadow: 0 6px 16px rgba(0,0,0,.08), 0 3px 6px rgba(0,0,0,.12), 0 9px 28px 8px rgba(0,0,0,.05); letter-spacing: .01em; }
.modal-head { height: 67px; flex: none; display: flex; align-items: center; justify-content: space-between; padding: 0 26px 2px 30px; border-bottom: 1px solid #ececec; font-size: 20px; font-weight: 500; color: #333; }
.modal-body { flex: 1; padding: 30px 29px 0 30px; }
.stepper { display: flex; align-items: center; gap: 15px; height: 30px; }
.step { display: flex; align-items: center; gap: 9px; font-size: 18px; color: #777; white-space: nowrap; }
.step-ic { color: #1890ff; }
.step-line { flex: 346 1 0; height: 2px; background: #1890ff; }
.step-line-b { flex: 311 1 0; }
.step-now { color: #333; }
.step-num { width: 30px; height: 30px; border-radius: 50%; background: #1890ff; color: #fff; font-size: 14px; line-height: 30px; text-align: center; }
.modal-h2 { margin: 66px 0 0; font-size: 23px; line-height: 32px; font-weight: 600; color: #111; letter-spacing: .005em; }
.action-card { margin-top: 28px; height: 201px; border: 1px solid #ececec; border-radius: 8px; padding: 0 20px; }
.action-head { height: 66px; padding-top: 2px; display: flex; align-items: center; border-bottom: 2px solid #f2f2f2; }
.action-grip { color: #a3a3a3; margin-left: 7px; }
.action-name { margin-left: 21px; font-size: 17.500px; font-weight: 500; color: #222; }
.action-del { margin-left: auto; margin-top: -2px; width: 39px; height: 29px; border: 1px solid #ddd; border-radius: 4px; display: flex; align-items: center; justify-content: center; color: #595959; box-shadow: 0 1px 1px rgba(0,0,0,.05); }
.action-del svg { margin-top: -4px; }
.action-label { margin-top: 20px; font-size: 17.500px; line-height: 24px; font-weight: 500; color: #222; }
.select { margin-top: 11px; height: 39px; border: 2px solid #d5d5d5; border-radius: 6px; background: #f5f5f5; box-shadow: 0 0 0 2px #d6e9fd; display: flex; align-items: center; padding: 0 13px 0 14px; gap: 12px; font-size: 18px; color: #888; }
.select svg { color: #777; }
.select-chev { margin-left: auto; color: #bbb !important; }
.add-action { margin-top: 21px; height: 70px; border: 2px dashed #1890ff; border-radius: 12px; }
.modal-foot { flex: none; margin: 0 29px 0 30px; border-top: 1px solid #ececec; padding: 30px 0 31px; display: flex; justify-content: space-between; }
.foot-right { display: flex; gap: 15px; }
.btn { height: 38px; padding: 0 18px; min-width: 81px; background: #fff; border: 1px solid #d9d9d9; border-radius: 3px; font: inherit; font-size: 17.500px; color: #777; box-shadow: 0 1px 1px rgba(0,0,0,.04); letter-spacing: .01em; }
.foot-right .btn:first-child { width: 101px; }
.btn-save { background: #1890ff; border-color: #1890ff; color: #fff; font-weight: 500; width: 82px; }

.dropdown { position: absolute; left: 50px; top: 418px; width: 1012px; height: 257px; margin: 0; padding: 7px 0 0 1px; list-style: none; background: #fff; border-radius: 6px; box-shadow: 0 6px 16px rgba(0,0,0,.08), 0 3px 6px rgba(0,0,0,.08); display: flex; flex-direction: column; gap: 7px; }
.opt { height: 43px; flex: none; width: 1005px; border: 3px solid #ff6252; border-radius: 12px; position: relative; font-size: 18px; color: #777; line-height: 1; padding: 0 0 0 11.500px; display: flex; align-items: flex-end; }
.opt svg { color: #595959; align-self: flex-start; }
.opt span { margin-left: 5.500px; padding-bottom: 3px; white-space: nowrap; }
.opt:nth-child(n+4) span { padding-bottom: 4px; }
.opt-first { background: #fafafa; }
.opt-first span { font-weight: 600; color: #595959; }
.num { position: absolute; right: -13px; top: -2px; width: 50px; height: 40px; border-radius: 11px; background: #000; color: #fff; font: 400 33px/40px "Liberation Sans", Arial, sans-serif; text-align: center; letter-spacing: 0; }
```
